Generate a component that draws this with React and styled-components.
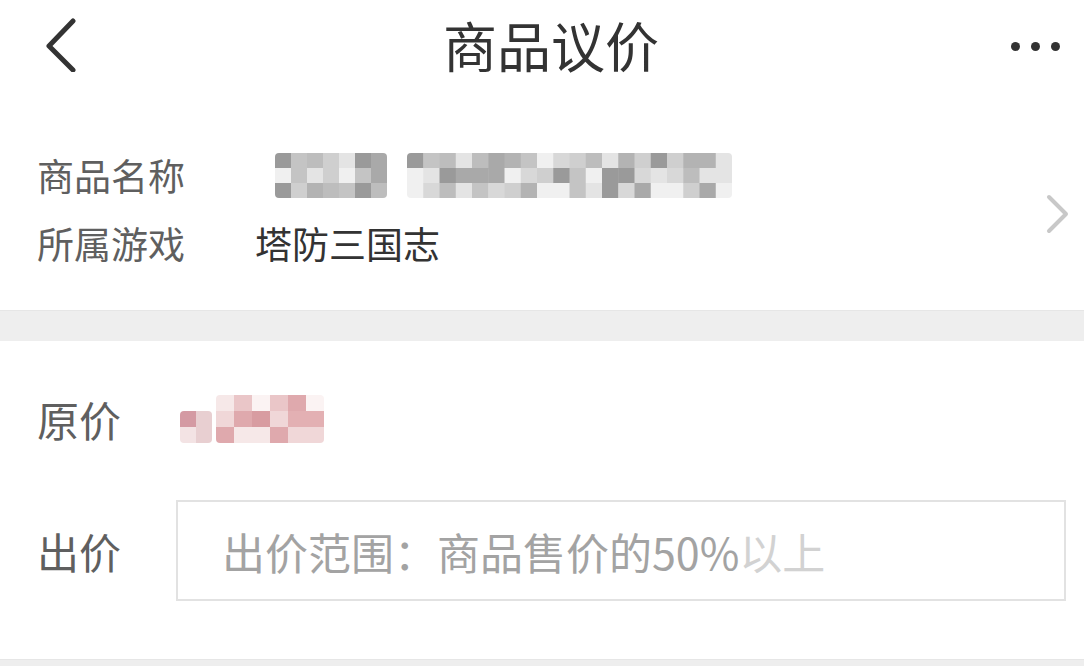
import React from "react";
import styled, { createGlobalStyle } from "styled-components";

const Global = createGlobalStyle`
  html, body { margin: 0; padding: 0; background: #fff; }
  body { font-family: "Noto Sans CJK SC", "Noto Sans", sans-serif; }
`;

const Page = styled.div`
  width: 1084px;
  height: 666px;
  overflow: hidden;
  display: flex;
  flex-direction: column;
  background: #fff;
`;

const Header = styled.header`
  height: 90px;
  flex: none;
  display: grid;
  grid-template-columns: 1fr auto 1fr;
  align-items: center;
  padding: 0 24px 0 42px;
`;

const Title = styled.h1`
  margin: 0;
  font-size: 54px;
  font-weight: 400;
  color: #333;
  line-height: 1;
  letter-spacing: 0;
`;

const HeaderRight = styled.div`
  display: flex;
  justify-content: flex-end;
  gap: 11px;
  padding-top: 2px;
`;

const Dot = styled.span`
  width: 9px;
  height: 9px;
  border-radius: 50%;
  background: #333;
`;

const InfoSection = styled.section`
  flex: none;
  display: flex;
  align-items: center;
  padding: 60px 12px 42px 37px;
`;

const InfoRows = styled.div`
  flex: 1;
  display: flex;
  flex-direction: column;
  gap: 18px;
`;

const Row = styled.div`
  display: flex;
  align-items: center;
  height: ${(p) => p.$h || 50}px;
`;

const Label = styled.span`
  width: ${(p) => p.$w}px;
  flex: none;
  font-size: ${(p) => p.$size}px;
  color: #5f5f5f;
  line-height: 1;
`;

const Value = styled.span`
  font-size: 37px;
  color: #333;
  line-height: 1;
`;

const Chevron = styled.svg`
  margin-top: 10px;
  flex: none;
`;

const Band = styled.div`
  height: ${(p) => p.$h}px;
  flex: none;
  background: #eeeeee;
  border-top: 1px solid #e6e6e6;
  box-sizing: border-box;
`;

const PriceSection = styled.section`
  flex: none;
  display: flex;
  flex-direction: column;
  gap: 51px;
  padding: 48px 18px 58px 37px;
`;

const InputBox = styled.div`
  flex: 1;
  height: 101px;
  box-sizing: border-box;
  border: 2px solid #e2e2e2;
  display: flex;
  align-items: center;
  padding-left: 44px;
  margin-left: -4px;
`;

const Placeholder = styled.span`
  font-size: 43px;
  color: #a3a3a3;
  line-height: 1;
  margin-top: 2px;
`;

const Faint = styled.span`
  color: #d2d2d2;
`;

function rnd(seed) {
  let s = seed;
  return () => {
    s = (s * 9301 + 49297) % 233280;
    return s / 233280;
  };
}

function Mosaic({ width, height, cell, seed, palette, rows }) {
  const r = rnd(seed);
  const cols = Math.ceil(width / cell);
  const rects = [];
  for (let y = 0; y < rows; y++) {
    for (let x = 0; x < cols; x++) {
      const c = palette[Math.floor(r() * palette.length)];
      rects.push(
        <rect key={`${x}-${y}`} x={x * cell} y={y * (height / rows)} width={cell + 0.5} height={height / rows + 0.5} fill={c} />
      );
    }
  }
  return (
    <svg width={width} height={height} style={{ display: "block", borderRadius: 4 }}>
      {rects}
    </svg>
  );
}

const MosaicGroup = styled.div`
  display: flex;
  gap: 20px;
  margin-left: 20px;
`;

const PriceMosaic = styled.div`
  display: flex;
  align-items: flex-end;
  gap: 4px;
`;

const grays = ["#a9a9a9", "#bdbdbd", "#cfcfcf", "#e4e4e4", "#9a9a9a", "#c4c4c4", "#b3b3b3", "#f0f0f0", "#d8d8d8"];
const pinks = ["#dfa9ad", "#e6b6b9", "#f0d7d8", "#d89ca1", "#eac6c8", "#f6e8e8", "#e3b0b3", "#fbf3f3"];
const pinkDot = ["#ecd3d5", "#d49aa3", "#f3e3e4", "#e8cfd1"];

export default function App() {
  return (
    <Page>
      <Global />
      <Header>
        <svg width="36" height="54" viewBox="0 0 36 54">
          <path d="M31 3 L7 28 L31 52" fill="none" stroke="#333" strokeWidth="5" strokeLinecap="round" strokeLinejoin="round" />
        </svg>
        <Title>商品议价</Title>
        <HeaderRight>
          <Dot />
          <Dot />
          <Dot />
        </HeaderRight>
      </Header>

      <InfoSection>
        <InfoRows>
          <Row>
            <Label $w={218} $size={37}>商品名称</Label>
            <MosaicGroup>
              <Mosaic width={112} height={45} cell={16} rows={3} seed={7} palette={grays} />
              <Mosaic width={325} height={45} cell={16.25} rows={3} seed={31} palette={grays} />
            </MosaicGroup>
          </Row>
          <Row>
            <Label $w={218} $size={37}>所属游戏</Label>
            <Value>塔防三国志</Value>
          </Row>
        </InfoRows>
        <Chevron width="28" height="40" viewBox="0 0 28 40">
          <path d="M5 3 L22 20 L5 37" fill="none" stroke="#c8c8c8" strokeWidth="4" strokeLinecap="round" strokeLinejoin="round" />
        </Chevron>
      </InfoSection>

      <Band $h={31} />

      <PriceSection>
        <Row $h={60}>
          <Label $w={143} $size={42}>原价</Label>
          <PriceMosaic>
            <Mosaic width={32} height={32} cell={16} rows={2} seed={5} palette={pinkDot} />
            <Mosaic width={108} height={48} cell={18} rows={3} seed={13} palette={pinks} />
          </PriceMosaic>
        </Row>
        <Row $h={101}>
          <Label $w={143} $size={42}>出价</Label>
          <InputBox>
            <Placeholder>
              出价范围：商品售价的50%<Faint>以上</Faint>
            </Placeholder>
          </InputBox>
        </Row>
      </PriceSection>

      <Band $h={10} />
    </Page>
  );
}
